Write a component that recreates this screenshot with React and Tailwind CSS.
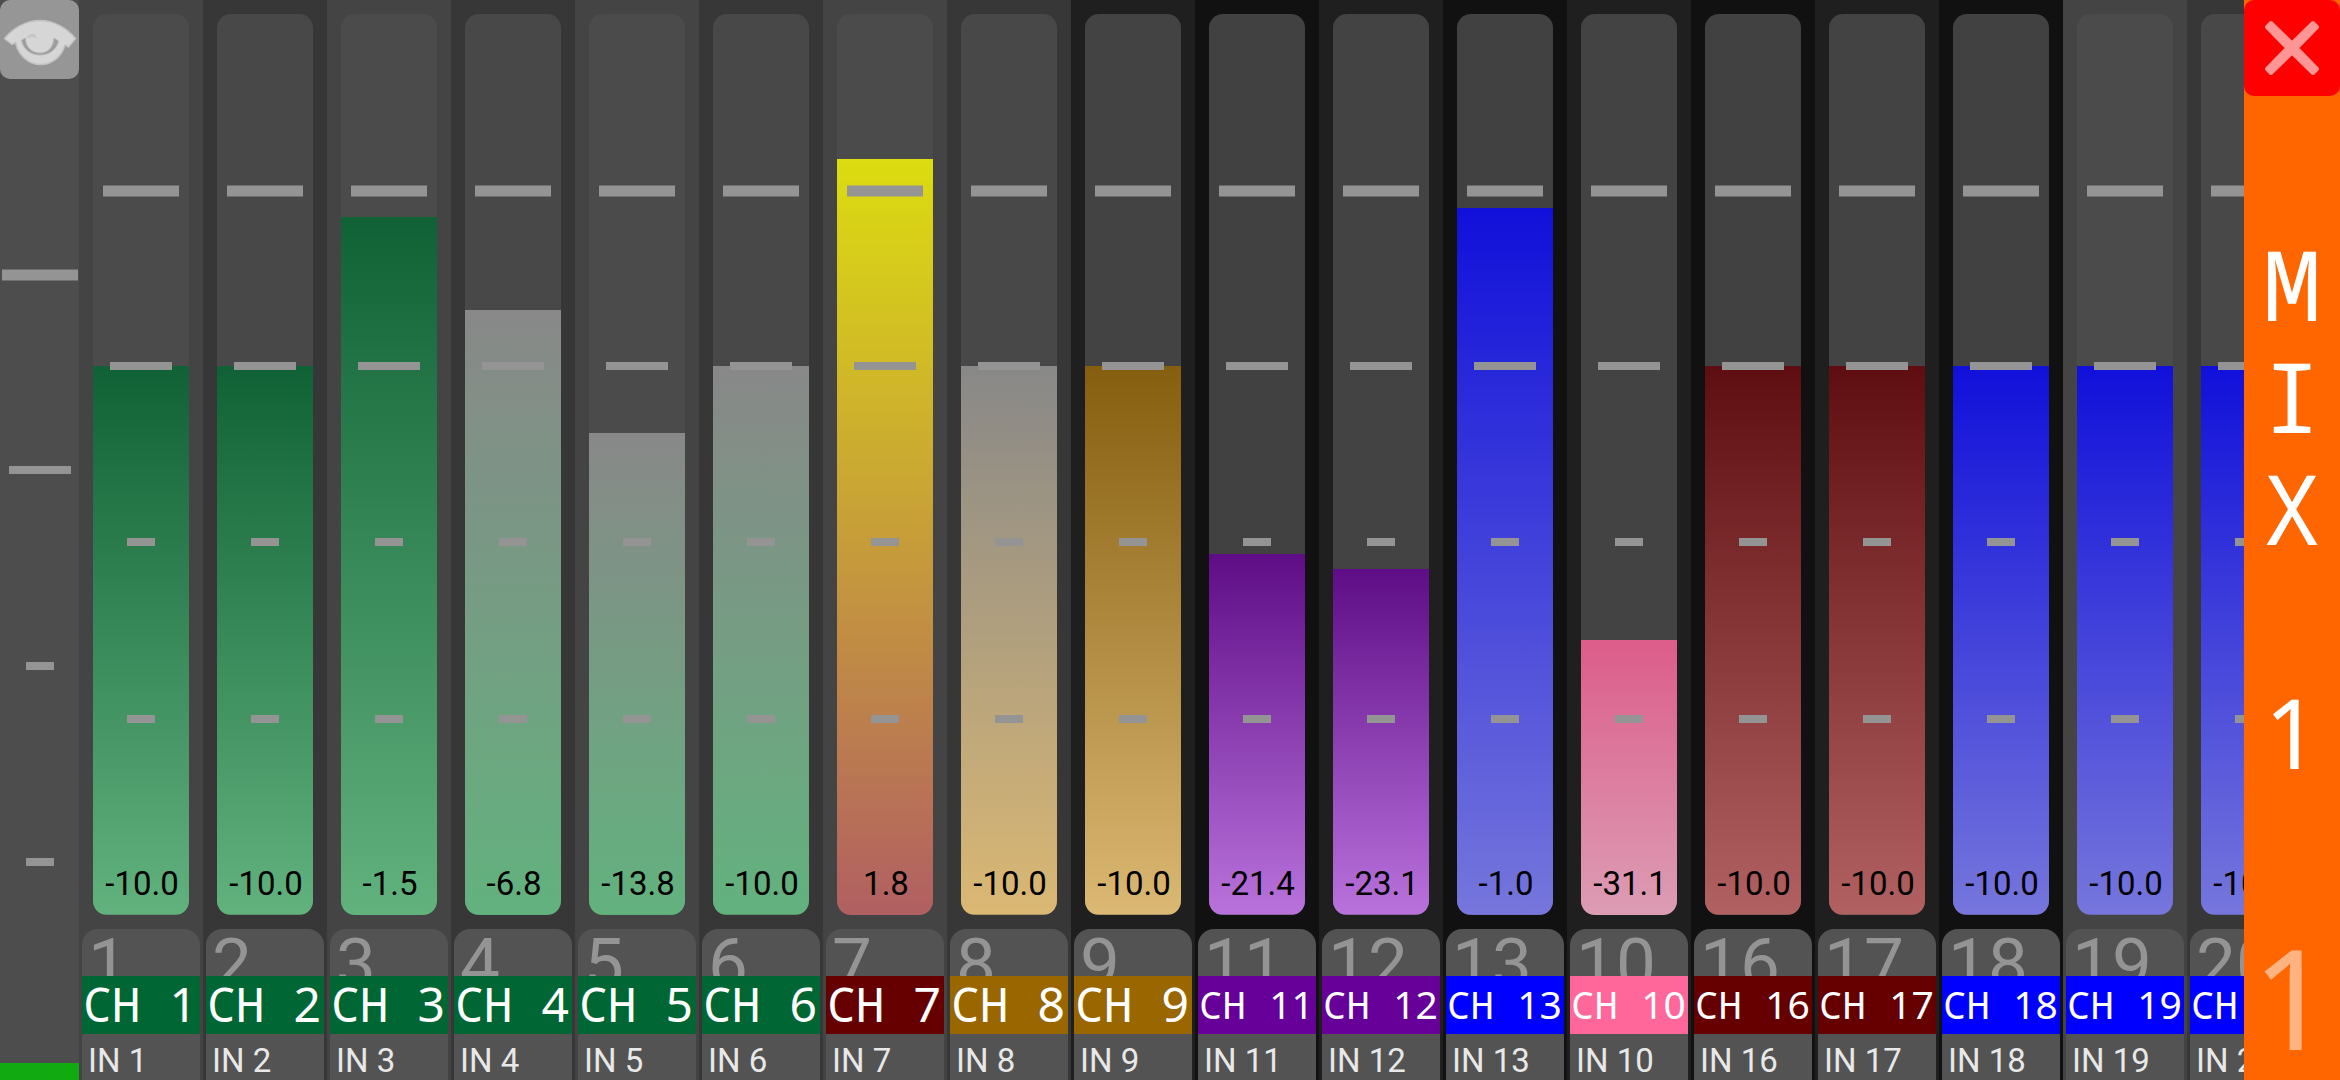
import { useState } from "react";

const LIGHT = { column: "bg-[#444444]", track: "bg-[#4b4b4b]" };
const DARK = { column: "bg-[#373737]", track: "bg-[#484848]" };
const DIM = { column: "bg-[#1f1f1f]", track: "bg-[#434343]" };
const BLACK = { column: "bg-[#111111]", track: "bg-[#414141]" };

const FILL = {
  green: "from-[#106135] to-[#62b27e]",
  grayGreen: "from-[#888888] to-[#62b27e]",
  yellow: "from-[#dcdc10] to-[#b15f62]",
  grayGold: "from-[#888888] to-[#dbb873]",
  gold: "from-[#865e0f] to-[#dbb873]",
  purple: "from-[#5e0d86] to-[#b972dc]",
  blue: "from-[#1010da] to-[#7676dc]",
  pink: "from-[#dc5d89] to-[#dc9db4]",
  red: "from-[#5e0e10] to-[#b16161]",
};

const LABEL = {
  green: "bg-[#006633]",
  red: "bg-[#660000]",
  gold: "bg-[#996600]",
  purple: "bg-[#660099]",
  blue: "bg-[#0000ff]",
  pink: "bg-[#ff6699]",
};

const CHANNELS = [
  { id: 1, db: -10, fill: FILL.green, label: LABEL.green, tone: LIGHT },
  { id: 2, db: -10, fill: FILL.green, label: LABEL.green, tone: DARK },
  { id: 3, db: -1.5, fill: FILL.green, label: LABEL.green, tone: LIGHT },
  { id: 4, db: -6.8, fill: FILL.grayGreen, label: LABEL.green, tone: DARK },
  { id: 5, db: -13.8, fill: FILL.grayGreen, label: LABEL.green, tone: LIGHT },
  { id: 6, db: -10, fill: FILL.grayGreen, label: LABEL.green, tone: DARK },
  { id: 7, db: 1.8, fill: FILL.yellow, label: LABEL.red, tone: LIGHT },
  { id: 8, db: -10, fill: FILL.grayGold, label: LABEL.gold, tone: DARK },
  { id: 9, db: -10, fill: FILL.gold, label: LABEL.gold, tone: DIM },
  { id: 11, db: -21.4, fill: FILL.purple, label: LABEL.purple, tone: BLACK },
  { id: 12, db: -23.1, fill: FILL.purple, label: LABEL.purple, tone: DIM },
  { id: 13, db: -1, fill: FILL.blue, label: LABEL.blue, tone: BLACK },
  { id: 10, db: -31.1, fill: FILL.pink, label: LABEL.pink, tone: DIM },
  { id: 16, db: -10, fill: FILL.red, label: LABEL.red, tone: BLACK },
  { id: 17, db: -10, fill: FILL.red, label: LABEL.red, tone: DIM },
  { id: 18, db: -10, fill: FILL.blue, label: LABEL.blue, tone: BLACK },
  { id: 19, db: -10, fill: FILL.blue, label: LABEL.blue, tone: LIGHT },
  { id: 20, db: -10, fill: FILL.blue, label: LABEL.blue, tone: DARK },
];

// Fader law: [level in dB, height in percent]
const LAW = [
  [-60, 0],
  [-40, 21.8],
  [-20, 41.4],
  [-10, 60.9],
  [0, 80.4],
  [10, 100],
];

function interpolate(value, from, to) {
  for (let i = 1; i < LAW.length; i++) {
    const a = LAW[i - 1];
    const b = LAW[i];
    if (value <= b[from] || i === LAW.length - 1) {
      return a[to] + ((value - a[from]) / (b[from] - a[from])) * (b[to] - a[to]);
    }
  }
}

const toPercent = (db) => interpolate(db, 0, 1);
const toDb = (percent) => interpolate(percent, 1, 0);

function Ticks() {
  return (
    <div className="pointer-events-none absolute inset-0" aria-hidden="true">
      <i className="absolute top-[19.6%] left-1/2 h-[11px] w-[76px] -translate-1/2 bg-[#949494]" />
      <i className="absolute top-[39.1%] left-1/2 h-2 w-[62px] -translate-1/2 bg-[#949494]" />
      <i className="absolute top-[58.6%] left-1/2 h-2 w-[28px] -translate-1/2 bg-[#949494]" />
      <i className="absolute top-[78.2%] left-1/2 h-2 w-[28px] -translate-1/2 bg-[#949494]" />
    </div>
  );
}

function Fader({ label, percent, fill, onChange }) {
  return (
    <input
      type="range"
      min="0"
      max="100"
      step="0.1"
      value={percent}
      onChange={(e) => onChange(Number(e.target.value))}
      aria-label={label}
      className={`absolute inset-0 h-full w-full cursor-pointer appearance-none bg-linear-to-b/srgb bg-bottom bg-no-repeat [direction:rtl] [writing-mode:vertical-lr] [&::-webkit-slider-thumb]:opacity-0 ${fill}`}
      style={{ backgroundSize: `100% ${percent}%` }}
    />
  );
}

function Channel({ id, db, fill, label, tone }) {
  const [percent, setPercent] = useState(toPercent(db));
  return (
    <section className={`flex w-[124px] shrink-0 flex-col gap-3.5 pt-3.5 ${tone.column}`}>
      <div className={`relative mx-3.5 flex flex-1 items-end justify-center overflow-hidden rounded-[14px] ${tone.track}`}>
        <Fader label={`Channel ${id} level`} percent={percent} fill={fill} onChange={setPercent} />
        <Ticks />
        <output className="pointer-events-none relative pb-3 pl-0.5 text-[33px] leading-[38px] text-black">
          {toDb(percent).toFixed(1)}
        </output>
      </div>
      <button type="button" className="mx-[3px] flex flex-col overflow-hidden rounded-t-2xl bg-[#535353] text-left">
        <span className="h-[47px] overflow-hidden pl-1.5 text-[71px] leading-[70px] text-[#949494]">{id}</span>
        <span
          className={`h-[58px] pl-px font-['Noto_Sans_Mono','Noto_Sans',monospace] leading-[56px] whitespace-pre text-white ${label} ${
            id < 10 ? "text-[48px]" : "text-[39px]"
          }`}
        >
          CH <span className="font-['Noto_Sans',sans-serif]">{id}</span>
        </span>
        <span className="h-[46px] pl-1.5 text-[33px] leading-[54px] text-[#e8e8e8]">IN {id}</span>
      </button>
    </section>
  );
}

function EyeIcon() {
  return (
    <svg viewBox="0 0 79 79" className="w-full" aria-hidden="true">
      <path
        d="M4.500 38.500C13 28 26 20.500 40 20.500S67 28 75.500 38.500L68.500 47 65 45C62 56.500 52 64.500 40.500 64.500S18.500 56 15.500 42.500L12 44.500Z"
        fill="#d6d6d6"
        stroke="#c2c2c2"
        strokeWidth="1.500"
        strokeLinejoin="round"
      />
      <path
        d="M21.500 40L25.500 38C25.500 47.500 32 53 40 53S53.500 47 54 38L58.500 41C57 49 49.500 55 40 55S23 49 21.500 40Z"
        fill="#9c9c9c"
        stroke="#b8b8b8"
        strokeWidth="1"
      />
      <path d="M27.500 36C30 34 33 33.500 34.500 34L37.500 38.500 33 37 27 38Z" fill="#c6c6c6" />
    </svg>
  );
}

function CloseIcon() {
  return (
    <svg viewBox="0 0 96 96" className="w-full" aria-hidden="true">
      <path
        d="M27 23L48 43.500 69 23 73 27 52.500 48 73 69 69 73 48 52.500 27 73 23 69 43.500 48 23 27Z"
        fill="#ff9696"
        stroke="#ff9696"
        strokeWidth="4"
        strokeLinejoin="round"
      />
    </svg>
  );
}

export default function App() {
  const [master, setMaster] = useState(1.7);
  return (
    <main className="flex h-screen min-h-[480px] overflow-hidden bg-[#111111] font-['Roboto',sans-serif]">
      <aside className="flex w-[79px] shrink-0 flex-col bg-[#4d4d4d]">
        <button type="button" aria-label="Toggle view" className="h-[79px] rounded-[10px] bg-[#969696]">
          <EyeIcon />
        </button>
        <div className="relative flex-1 overflow-hidden">
          <Fader label="Master level" percent={master} fill="from-[#11aa11] to-[#11aa11]" onChange={setMaster} />
          <Ticks />
        </div>
      </aside>

      <div className="flex flex-1 overflow-hidden">
        {CHANNELS.map((channel) => (
          <Channel key={channel.id} {...channel} />
        ))}
      </div>

      <aside className="flex w-24 shrink-0 flex-col bg-[#ff6600]">
        <button type="button" aria-label="Close" className="h-24 rounded-[10px] bg-[#ff0000]">
          <CloseIcon />
        </button>
        <h1 className="flex flex-1 flex-col items-center pt-[132px] font-['Noto_Sans_Mono',monospace] text-[96px] leading-[112px] text-white">
          <span>M</span>
          <span>I</span>
          <span>X</span>
          <span className="h-[112px]" />
          <span className="font-['Noto_Sans',sans-serif]">1</span>
        </h1>
        <p className="text-center font-['Noto_Sans',sans-serif] text-[139px] leading-[168px] text-[#ffb380]">1</p>
      </aside>
    </main>
  );
}
